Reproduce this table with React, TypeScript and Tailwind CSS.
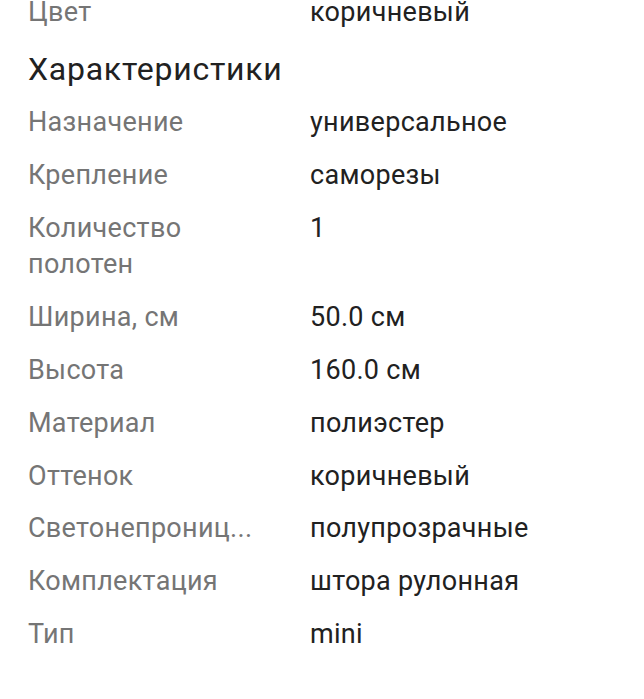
import React from "react";

type Row = { label: string; value: string };

const rows: Row[] = [
  { label: "Назначение", value: "универсальное" },
  { label: "Крепление", value: "саморезы" },
  { label: "Количество полотен", value: "1" },
  { label: "Ширина, см", value: "50.0 см" },
  { label: "Высота", value: "160.0 см" },
  { label: "Материал", value: "полиэстер" },
  { label: "Оттенок", value: "коричневый" },
  { label: "Светонепроницаемость", value: "полупрозрачные" },
  { label: "Комплектация", value: "штора рулонная" },
  { label: "Тип", value: "mini" },
];

const SpecRow = ({ label, value }: Row) => {
  const short = label.length > 18 ? label.slice(0, 13) + "..." : label;
  return (
    <div className="grid grid-cols-[282px_1fr] pb-[16.3px] text-[27px] leading-[36.5px] tracking-[0.3px]">
      <div className="text-[#757575] pr-[30px]">{short}</div>
      <div className="text-[#212121]">{value}</div>
    </div>
  );
};

const App = () => {
  return (
    <div
      className="min-h-screen bg-white overflow-hidden"
      style={{ fontFamily: "Roboto, 'Noto Sans', sans-serif" }}
    >
      <div className="px-[28px] -mt-[6px]">
        <SpecRow label="Цвет" value="коричневый" />
        <h2 className="mt-[4px] mb-[17.5px] text-[32px] leading-[36px] tracking-[0.75px] text-[#212121] font-normal">
          Характеристики
        </h2>
        {rows.map((r) => (
          <SpecRow key={r.label} label={r.label} value={r.value} />
        ))}
      </div>
    </div>
  );
};

export default App;
